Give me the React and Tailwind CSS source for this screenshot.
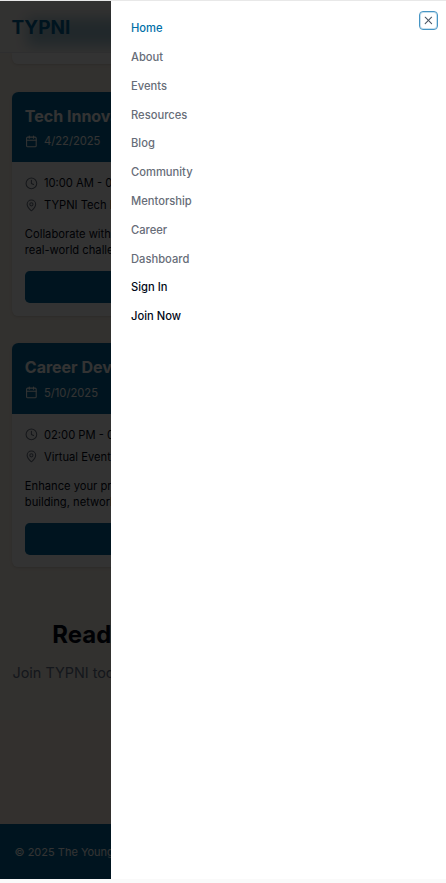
import React from "react";
import { Calendar, Clock, MapPin, X } from "lucide-react";

const links = ["Home", "About", "Events", "Resources", "Blog", "Community", "Mentorship", "Career", "Dashboard"];

const events = [
  {
    title: "Tech Innovation Hackathon",
    date: "4/22/2025",
    time: "10:00 AM - 06:00 PM",
    place: "TYPNI Tech Hub",
    lines: ["Collaborate with peers to solve", "real-world challenges together."],
  },
  {
    title: "Career Development Workshop",
    date: "5/10/2025",
    time: "02:00 PM - 05:00 PM",
    place: "Virtual Event",
    lines: ["Enhance your professional skills: resume", "building, networking and interviews."],
  },
];

function EventCard({ event }) {
  return (
    <article className="h-[224px] overflow-hidden rounded-[6.4px] bg-white shadow-sm">
      <div className="h-[70.4px] bg-[#006699] px-[12.8px] pt-[12.8px] text-white">
        <h3 className="text-[16px] leading-[22.4px] font-bold">{event.title}</h3>
        <div className="mt-[6px] flex h-4 items-center gap-[6.4px] text-[11.2px] leading-4">
          <Calendar size={12.8} className="shrink-0" />
          {event.date}
        </div>
      </div>
      <div className="px-[12.8px] pt-[12.8px] text-[11.2px] leading-4">
        <div className="flex h-4 items-center gap-[6.4px]">
          <Clock size={12.8} className="shrink-0 text-gray-500" />
          {event.time}
        </div>
        <div className="mt-[6px] flex h-4 items-center gap-[6.4px]">
          <MapPin size={12.8} className="shrink-0 text-gray-500" />
          {event.place}
        </div>
        <p className="mt-[13.2px]">
          {event.lines[0]}
          <br />
          {event.lines[1]}
        </p>
        <div className="mt-[12.8px] h-8 rounded-[4.8px] bg-[#006699]" />
      </div>
    </article>
  );
}

export default function App() {
  return (
    <div className="relative h-[883px] w-[446px] overflow-hidden bg-[#fafafa] pt-px font-['Inter',sans-serif] text-[#020817]">
      <div className="flex h-[878px] flex-col overflow-hidden bg-[#faf0e6] whitespace-nowrap">
        <header className="relative h-[52px] shrink-0 overflow-hidden border-b border-gray-200 bg-[#fbf8f4]">
          <div className="absolute top-[17px] left-[27px] h-[28px] w-[390px] bg-[#006699]/35 blur-[7px]" />
          <div className="relative px-[11.4px] pt-[13px] text-[19px] leading-7 font-bold text-[#006699]">TYPNI</div>
        </header>
        <div className="flex h-[667px] shrink-0 flex-col bg-[#faf2e8] px-[12px]">
          <div className="mb-[28px] h-[11px] shrink-0 rounded-b-[6.4px] bg-white shadow-sm" />
          <div className="flex flex-col gap-[27.4px]">
            {events.map((event) => (
              <EventCard key={event.title} event={event} />
            ))}
          </div>
          <h2 className="mt-[51.2px] pl-[40.3px] text-[24px] leading-8 font-bold">Ready to Make an Impact?</h2>
          <p className="mt-[11.4px] pl-[0.5px] text-[14.4px] leading-[22.4px] text-[#64748b]">
            Join TYPNI today and be part of a global network
          </p>
        </div>
        <div className="grow bg-[#fff0e6]" />
        <footer className="h-[55px] shrink-0 bg-[#006699] pt-[19.5px] pl-[14.5px] text-[11px] leading-4 text-white">
          © 2025 The Young Professionals Network International. All rights reserved.
        </footer>
      </div>

      <div className="absolute inset-x-0 top-px bottom-1 bg-black/80" />
      <div className="absolute inset-x-0 top-0 h-px bg-[#e8e8e8]" />
      <aside className="absolute top-px right-0 bottom-1 w-[335px] bg-white pt-[19.2px] pl-[20px]">
        <nav className="flex flex-col gap-[12.8px] text-[11.2px] leading-4 font-medium">
          {links.map((link) => (
            <a key={link} className={link === "Home" ? "text-[#006fa8]" : "text-[#676d78]"}>
              {link}
            </a>
          ))}
          <a className="text-[#020817]">Sign In</a>
          <a className="text-[#020817]">Join Now</a>
        </nav>
        <button
          aria-label="Close"
          className="absolute top-[10px] right-[8px] flex h-[19px] w-[19px] items-center justify-center rounded-[4px] border border-[#4695c4] bg-white text-[#4b5563] ring-1 ring-[#4695c4]/30 ring-inset"
        >
          <X size={12.8} />
        </button>
      </aside>
    </div>
  );
}
